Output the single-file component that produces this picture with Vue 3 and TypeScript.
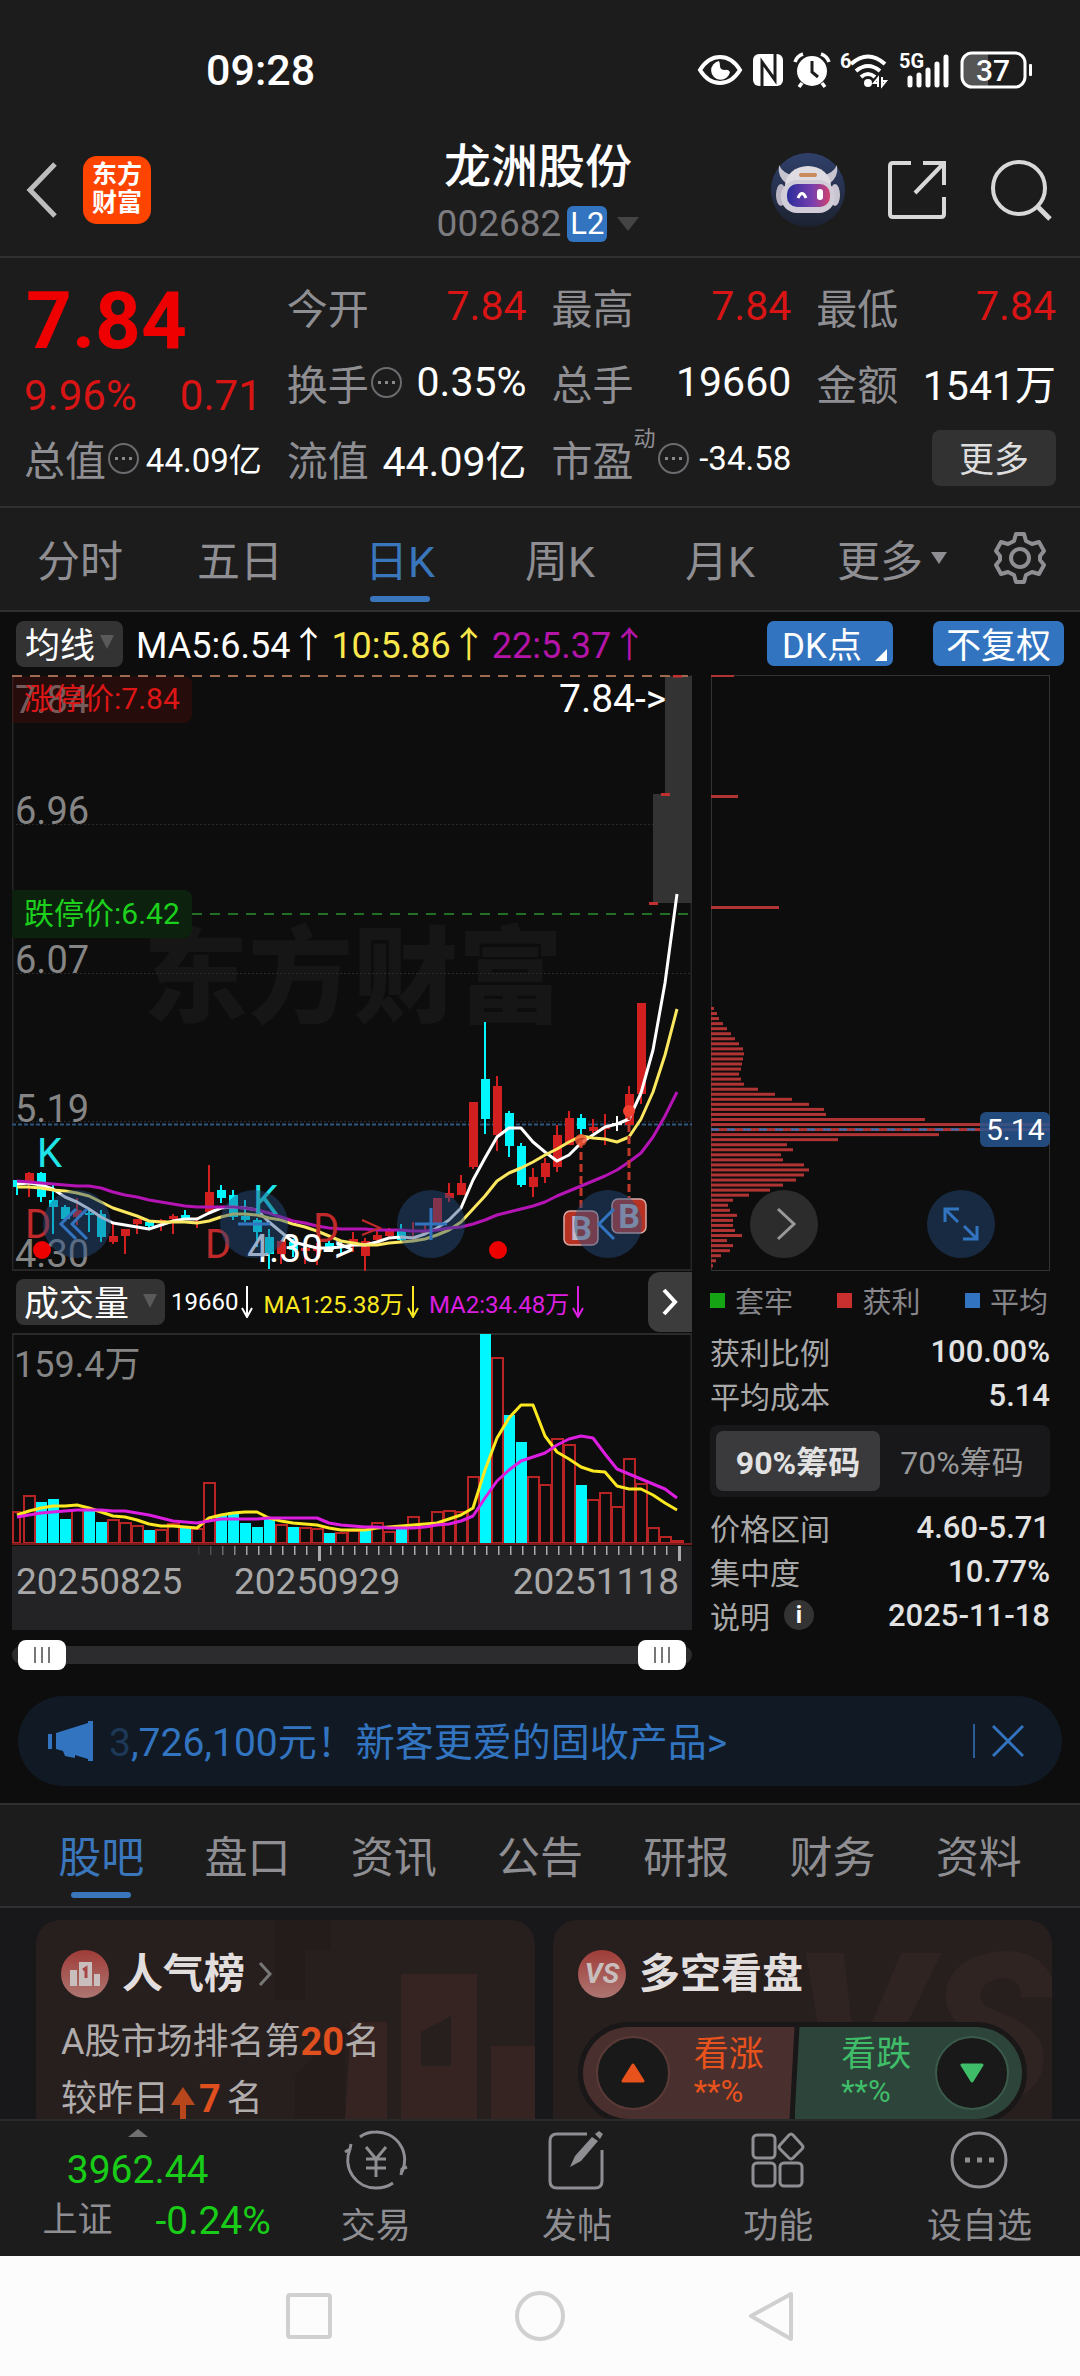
<script setup lang="ts">
import { ref } from 'vue'

type Tone = 'up' | 'down'
type Candle = [Tone, number, number, number, number]

const stepX = (i: number) => 17 + 12 * i

// tone, high, body top, body bottom, low
const candles: Candle[] = [
  ['down', 1180, 1180, 1187, 1195], ['up', 1172, 1173, 1182, 1197], ['down', 1172, 1173, 1197, 1202],
  ['down', 1185, 1200, 1207, 1234], ['down', 1205, 1207, 1219, 1219], ['up', 1198, 1210, 1217, 1225],
  ['down', 1210, 1213, 1215, 1232], ['down', 1210, 1214, 1237, 1242], ['up', 1223, 1236, 1242, 1244],
  ['up', 1229, 1229, 1236, 1254], ['up', 1219, 1219, 1224, 1234], ['down', 1220, 1222, 1226, 1228],
  ['up', 1219, 1220, 1222, 1231], ['up', 1214, 1216, 1219, 1234], ['down', 1210, 1215, 1218, 1219],
  ['up', 1217, 1221, 1223, 1228], ['up', 1165, 1192, 1212, 1212], ['down', 1185, 1190, 1198, 1203],
  ['down', 1190, 1195, 1217, 1220], ['down', 1200, 1216, 1220, 1222], ['down', 1218, 1220, 1232, 1247],
  ['down', 1229, 1237, 1254, 1269], ['up', 1240, 1241, 1254, 1264], ['down', 1239, 1242, 1250, 1257],
  ['up', 1243, 1248, 1251, 1264], ['up', 1243, 1248, 1251, 1265], ['down', 1240, 1243, 1250, 1252],
  ['down', 1241, 1245, 1247, 1254], ['up', 1232, 1239, 1243, 1252], ['up', 1238, 1241, 1256, 1271],
  ['up', 1231, 1235, 1240, 1242], ['up', 1228, 1230, 1236, 1238], ['down', 1224, 1229, 1240, 1241],
  ['up', 1222, 1236, 1239, 1240], ['up', 1225, 1230, 1233, 1235], ['up', 1198, 1198, 1223, 1223],
  ['up', 1183, 1193, 1198, 1202], ['up', 1175, 1183, 1195, 1195], ['up', 1102, 1102, 1167, 1169],
  ['down', 1022, 1079, 1119, 1134], ['up', 1076, 1086, 1135, 1151], ['down', 1111, 1113, 1146, 1157],
  ['down', 1143, 1146, 1185, 1187], ['up', 1168, 1177, 1187, 1197], ['up', 1158, 1163, 1177, 1183],
  ['up', 1125, 1135, 1167, 1172], ['up', 1111, 1118, 1145, 1145], ['down', 1114, 1118, 1129, 1137],
  ['up', 1119, 1127, 1131, 1133], ['up', 1114, 1127, 1129, 1145], ['up', 1124, 1124, 1124, 1124],
  ['up', 1086, 1094, 1125, 1128], ['up', 1003, 1003, 1094, 1104],
]

const ma5 = [
  1184, 1183, 1185, 1189, 1197, 1202, 1209, 1217, 1223, 1225, 1227, 1229, 1225, 1221, 1219, 1219, 1213, 1208, 1207,
  1208, 1210, 1222, 1232, 1242, 1245, 1248, 1248, 1247, 1245, 1245, 1242, 1238, 1237, 1238, 1234, 1228, 1220, 1208,
  1180, 1158, 1137, 1128, 1128, 1142, 1152, 1161, 1155, 1143, 1135, 1127, 1124, 1119, 1093, 1050, 983, 894,
]
const ma10 = [
  1187, 1187, 1188, 1190, 1191, 1193, 1196, 1202, 1208, 1212, 1216, 1221, 1222, 1222, 1222, 1223, 1221, 1217, 1214,
  1214, 1215, 1218, 1220, 1224, 1227, 1231, 1236, 1241, 1243, 1245, 1245, 1243, 1242, 1241, 1239, 1235, 1230, 1222,
  1209, 1196, 1181, 1173, 1168, 1162, 1155, 1149, 1142, 1136, 1138, 1139, 1142, 1137, 1119, 1092, 1055, 1009,
]
const ma22 = [
  1181, 1182, 1183, 1184, 1185, 1186, 1186, 1188, 1192, 1195, 1197, 1200, 1202, 1204, 1206, 1207, 1207, 1207, 1207,
  1208, 1210, 1213, 1217, 1221, 1223, 1226, 1228, 1229, 1229, 1229, 1230, 1230, 1230, 1231, 1231, 1230, 1228, 1227,
  1224, 1220, 1215, 1212, 1209, 1206, 1202, 1196, 1191, 1186, 1181, 1176, 1170, 1162, 1153, 1137, 1116, 1092,
]
const line = (ys: number[]) => ys.map((y, i) => `${stepX(i)},${y}`).join(' ')

const volumes: [Tone, number][] = [
  ['up', 1512], ['up', 1496], ['down', 1502], ['down', 1499], ['down', 1519], ['up', 1510], ['down', 1510],
  ['down', 1522], ['up', 1520], ['up', 1523], ['up', 1526], ['down', 1530], ['up', 1530], ['up', 1524],
  ['down', 1526], ['up', 1529], ['up', 1483], ['down', 1515], ['down', 1512], ['down', 1523], ['down', 1527],
  ['down', 1517], ['up', 1525], ['down', 1527], ['up', 1528], ['up', 1529], ['down', 1533], ['up', 1533],
  ['up', 1531], ['down', 1529], ['up', 1523], ['up', 1532], ['down', 1529], ['up', 1517], ['up', 1527],
  ['up', 1512], ['up', 1511], ['up', 1512], ['up', 1477], ['down', 1334], ['up', 1358], ['down', 1415],
  ['down', 1442], ['up', 1477], ['up', 1485], ['up', 1439], ['up', 1445], ['down', 1485], ['up', 1500],
  ['up', 1493], ['up', 1507], ['up', 1459], ['up', 1484], ['up', 1528], ['up', 1537], ['up', 1541],
]
const vol5 = [
  1515, 1511, 1508, 1506, 1506, 1505, 1508, 1512, 1516, 1517, 1520, 1524, 1526, 1526, 1527, 1528, 1518, 1515, 1513,
  1512, 1512, 1518, 1521, 1523, 1524, 1525, 1528, 1530, 1530, 1530, 1528, 1527, 1526, 1525, 1524, 1523, 1519, 1515,
  1508, 1470, 1438, 1418, 1405, 1405, 1436, 1452, 1459, 1467, 1471, 1472, 1486, 1489, 1489, 1495, 1503, 1510,
]
const vol10 = [
  1517, 1515, 1513, 1512, 1511, 1510, 1510, 1510, 1511, 1511, 1513, 1515, 1518, 1521, 1522, 1523, 1521, 1519, 1519,
  1519, 1519, 1518, 1518, 1518, 1518, 1518, 1523, 1525, 1526, 1527, 1527, 1528, 1528, 1528, 1527, 1525, 1524, 1521,
  1516, 1498, 1481, 1470, 1461, 1457, 1453, 1445, 1439, 1436, 1438, 1454, 1469, 1474, 1479, 1484, 1489, 1498,
]
const ticks = Array.from({ length: 41 }, (_, i) => 198 + 12 * i)

const chips = [
  3, 6, 8, 12, 16, 20, 24, 28, 32, 33, 32, 31, 30, 28, 30, 33, 47, 64, 81, 98, 113, 115, 214, 339, 339, 228, 127, 76,
  82, 70, 72, 93, 98, 93, 85, 72, 59, 38, 22, 17, 19, 26, 22, 22, 24, 31, 16, 22, 19, 10, 5, 2,
]
const chipY = (i: number) => 1008.5 + 5.045 * i

const periods = ['分时', '五日', '日K', '周K', '月K']
const period = ref('日K')
const sections = ['股吧', '盘口', '资讯', '公告', '研报', '财务', '资料']
const section = ref('股吧')
const chipRange = ref('90')
const rangeStart = ref(0)
const rangeEnd = ref(100)
</script>

<template>
  <main class="screen">
    <header class="status">
      <span class="clock">09:28</span>
      <div class="status-icons">
        <svg width="46" height="34" viewBox="0 0 46 34" aria-label="护眼">
          <path d="M3 17Q11 4 23 4T43 17Q35 30 23 30T3 17Z" fill="none" stroke="#fff" stroke-width="4" />
          <path d="M22 8a9.500 9.500 0 1 0 11 11q-2-3-5-2q-5 0-5-4q0-3-1-5Z" fill="#fff" />
        </svg>
        <svg width="32" height="34" viewBox="0 0 32 34" aria-label="NFC">
          <rect x="1" y="1" width="30" height="32" rx="6" fill="#fff" />
          <path d="M10 33V9l13 18V1" fill="none" stroke="#1c1c1c" stroke-width="3" />
        </svg>
        <svg width="38" height="36" viewBox="0 0 38 36" aria-label="闹钟">
          <circle cx="19" cy="19" r="15" fill="#fff" />
          <path d="M2 10q2-6 8-8M36 10q-2-6-8-8M9 31l-3 4M29 31l3 4" stroke="#fff" stroke-width="3.500" fill="none" />
          <path d="M19 9v11l6 5" stroke="#1c1c1c" stroke-width="3" fill="none" />
        </svg>
        <svg width="50" height="38" viewBox="0 0 50 38" aria-label="Wi-Fi">
          <text x="0" y="17" class="tiny-text">6</text>
          <g fill="none" stroke="#fff" stroke-width="4">
            <path d="M11 13q17-15 34 0" /><path d="M16 20q12-10 24 0" /><path d="M21 26q7-6 14 0" />
          </g>
          <circle cx="28" cy="32" r="4" fill="#fff" />
          <path d="M38 36v-9l-4 5h4M42 26v9l4-5h-4" stroke="#fff" stroke-width="2" fill="none" />
        </svg>
        <svg width="52" height="38" viewBox="0 0 52 38" aria-label="5G">
          <text x="0" y="17" class="tiny-text">5G</text>
          <path d="M11 27v7M20 24v10M29 19v15M38 13v21M47 6v28" stroke="#fff" stroke-width="5" stroke-linecap="round" />
        </svg>
        <svg width="74" height="38" viewBox="0 0 74 38" aria-label="电量 37%">
          <path d="M12 3h16v32H12a9 9 0 0 1-9-9V12a9 9 0 0 1 9-9Z" fill="#555" />
          <rect x="2" y="2" width="63" height="34" rx="10" fill="none" stroke="#fff" stroke-width="3" />
          <rect x="69" y="13" width="3" height="12" rx="1" fill="#fff" />
          <text x="33" y="30" text-anchor="middle" class="battery-text">37</text>
        </svg>
      </div>
    </header>

    <nav class="title-bar">
      <div class="title-left">
        <button aria-label="返回">
          <svg width="36" height="60" viewBox="0 0 36 60"><path d="M31 4L6 30l25 26" fill="none" stroke="#bdbdbd" stroke-width="5" /></svg>
        </button>
        <a href="#" class="logo">东方<br />财富</a>
      </div>
      <div class="title-mid">
        <h1>龙洲股份</h1>
        <p>002682<b>L2</b><i class="tri"></i></p>
      </div>
      <div class="title-right">
        <button aria-label="智能助手">
          <svg width="76" height="76" viewBox="0 0 76 76">
            <defs>
              <linearGradient id="visor"><stop offset="0" stop-color="#2a2c9c" /><stop offset="0.600" stop-color="#7a3fae" /><stop offset="1" stop-color="#d2416e" /></linearGradient>
              <linearGradient id="halo" x1="0" y1="0" x2="0" y2="1"><stop offset="0" stop-color="#30406a" /><stop offset="1" stop-color="#1c2230" /></linearGradient>
            </defs>
            <circle cx="38" cy="38" r="37" fill="url(#halo)" />
            <path d="M9 13q-2 12 8 19l8-8q-12-2-16-11M67 13q2 12-8 19l-8-8q12-2 16-11" fill="#c8c4cf" />
            <ellipse cx="38" cy="34" rx="23" ry="20" fill="#dedbe2" />
            <ellipse cx="11" cy="43" rx="5" ry="11" fill="#b9b5c4" /><ellipse cx="65" cy="43" rx="5" ry="11" fill="#c9c5d0" />
            <rect x="11" y="28" width="54" height="33" rx="16" fill="#d0cdd8" />
            <rect x="17" y="32" width="43" height="23" rx="10" fill="url(#visor)" />
            <path d="M28 46q4-9 8 0" fill="none" stroke="#fff" stroke-width="3" /><rect x="47" y="37" width="6" height="11" rx="3" fill="#fff" />
            <rect x="29" y="21" width="18" height="4" rx="2" fill="#c88b5c" />
          </svg>
        </button>
        <button aria-label="分享">
          <svg width="62" height="62" viewBox="0 0 62 62"><path d="M24 4H6q-3 0-3 3v48q0 3 3 3h48q3 0 3-3V38M36 4h21v22M57 4L28 34" fill="none" stroke="#d8d8d8" stroke-width="4" /></svg>
        </button>
        <button aria-label="搜索">
          <svg width="62" height="62" viewBox="0 0 62 62"><circle cx="29" cy="29" r="26" fill="none" stroke="#d8d8d8" stroke-width="4" /><path d="M47 47l13 13" stroke="#d8d8d8" stroke-width="5" /></svg>
        </button>
      </div>
    </nav>

    <section class="quote">
      <div class="price-col">
        <strong>7.84</strong>
        <div class="change"><span>9.96%</span><span>0.71</span></div>
      </div>
      <dl class="cell"><dt>今开</dt><dd class="red">7.84</dd></dl>
      <dl class="cell"><dt>最高</dt><dd class="red">7.84</dd></dl>
      <dl class="cell"><dt>最低</dt><dd class="red">7.84</dd></dl>
      <dl class="cell"><dt>换手<i class="more-dot"></i></dt><dd>0.35%</dd></dl>
      <dl class="cell"><dt>总手</dt><dd>19660</dd></dl>
      <dl class="cell"><dt>金额</dt><dd>1541万</dd></dl>
      <dl class="cell"><dt>总值<i class="more-dot"></i></dt><dd class="small">44.09亿</dd></dl>
      <dl class="cell"><dt>流值</dt><dd>44.09亿</dd></dl>
      <dl class="cell"><dt>市盈<sup>动</sup><i class="more-dot"></i></dt><dd class="small">-34.58</dd></dl>
      <div class="more-cell"><button class="more">更多</button></div>
    </section>

    <nav class="periods">
      <button v-for="p in periods" :key="p" :class="{ on: p === period }" @click="period = p">{{ p }}</button>
      <button><span class="with-tri">更多</span></button>
      <button class="gear" aria-label="设置">
        <svg width="56" height="56" viewBox="0 0 56 56" fill="none" stroke="#8e8e93" stroke-width="4">
          <path d="M24 4h8l2 7 6 3 7-2 5 9-4 5v4l4 5-5 9-7-2-6 3-2 7h-8l-2-7-6-3-7 2-5-9 4-5v-4l-4-5 5-9 7 2 6-3Z" stroke-linejoin="round" />
          <circle cx="28" cy="28" r="9" />
        </svg>
      </button>
    </nav>

    <section class="market">
      <div class="indicators">
        <button class="pick">均线<i class="tri"></i></button>
        <span>MA5:6.54↑</span><span class="yellow">10:5.86↑</span><span class="purple">22:5.37↑</span>
        <div class="blue-actions">
          <button class="blue dk">DK点</button>
          <button class="blue">不复权</button>
        </div>
      </div>

      <div class="charts">
        <div class="left">
          <div class="plot">
            <svg viewBox="12 675 680 596" role="img" aria-label="日K线">
              <text x="143" y="1014" class="watermark">东方财富</text>
              <path d="M12 824.500H692M12 973.500H692M12 1121.500H692" stroke="#2b2b2b" stroke-dasharray="2 2" />
              <path d="M12.500 675V1270H691.500V675" fill="none" stroke="#262626" stroke-width="2" />
              <path d="M665 676h27v227h-39v-109h12Z" fill="#333" />
              <g class="axis">
                <text x="15" y="713">7.84</text><text x="15" y="824">6.96</text><text x="15" y="973">6.07</text>
                <text x="15" y="1122">5.19</text><text x="15" y="1267">4.30</text>
              </g>
              <path d="M12 676H184a8 8 0 0 1 8 8v31a8 8 0 0 1-8 8H12Z" fill="#5a0c0c" fill-opacity="0.340" />
              <text x="24" y="709" class="limit" fill="#dd1616">涨停价:7.84</text>
              <path d="M12 676H692" stroke="#a06a50" stroke-width="2" stroke-dasharray="10 8" />
              <path d="M12 890H184a8 8 0 0 1 8 8v32a8 8 0 0 1-8 8H12Z" fill="#0c220e" />
              <text x="24" y="924" class="limit" fill="#1cd01c">跌停价:6.42</text>
              <path d="M192 914H692" stroke="#226f26" stroke-width="2" stroke-dasharray="10 8" />
              <path d="M12 1124.500H692" stroke="#2d5580" stroke-width="2" stroke-dasharray="4 2" />
              <g v-for="(c, i) in candles" :key="i" :fill="c[0] === 'up' ? '#d21f1f' : '#00f7ff'">
                <rect :x="stepX(i) - 1" :y="c[1]" width="2" :height="c[4] - c[1]" />
                <rect :x="Math.max(13, stepX(i) - 4)" :y="c[2]" :width="i ? 9 : 5" :height="c[3] - c[2]" />
              </g>
              <path d="M649 903.500h9M661 794.500h9M673 676h9" stroke="#c03030" stroke-width="3" />
              <path d="M617 1116v15M612 1124h10" stroke="#fff" stroke-width="2" />
              <g fill="none" stroke-width="3" stroke-linejoin="round">
                <polyline :points="line(ma5)" stroke="#fff" />
                <polyline :points="line(ma10)" stroke="#fbe860" />
                <polyline :points="line(ma22)" stroke="#b414b4" />
              </g>
              <g class="mark">
                <text x="37" y="1167" fill="#1fe4e8">K</text><text x="253" y="1214" fill="#1fe4e8">K</text>
                <g fill="#c02a2a"><text x="25" y="1238">D</text><text x="205" y="1258">D</text><text x="313" y="1242">D</text></g>
              </g>
              <path d="M362 1220l18 8-18 7" stroke="#c02a2a" stroke-width="2" fill="none" />
              <g class="peak"><text x="559" y="712">7.84-&gt;</text><text x="247" y="1262">4.30-&gt;</text></g>
              <circle cx="42" cy="1250" r="9" fill="#ee0000" /><circle cx="498" cy="1250" r="9" fill="#ee0000" />
              <path d="M581 1140V1210M629 1112V1198" stroke="#c0392b" stroke-width="3" stroke-dasharray="8 4" />
              <circle cx="581" cy="1140" r="6" fill="#ef5030" fill-opacity="0.800" /><circle cx="629" cy="1111" r="6" fill="#ef4030" />
              <g fill="#b83224" stroke="#d8aaa6" stroke-width="1.500">
                <rect x="564" y="1211" width="34" height="34" rx="6" /><rect x="612" y="1199" width="34" height="34" rx="6" />
              </g>
              <g class="buy"><text x="581" y="1240">B</text><text x="629" y="1228">B</text></g>
            </svg>
            <div class="float-tools">
              <button aria-label="向前"><svg viewBox="0 0 68 68"><path d="M33 19L18 34l15 15M44 19L29 34l15 15" /></svg></button>
              <button aria-label="缩小"><svg viewBox="0 0 68 68"><path d="M18 34h32" /></svg></button>
              <button aria-label="放大"><svg viewBox="0 0 68 68"><path d="M18 34h32M34 18v32" /></svg></button>
              <button aria-label="左移"><svg viewBox="0 0 68 68"><path d="M40 19L25 34l15 15" /></svg></button>
            </div>
          </div>

          <div class="volume-head">
            <button class="pick wide">成交量<i class="tri"></i></button>
            <span>19660<svg class="arrow" viewBox="0 0 12 32"><path d="M6 0v31M1 22l5 9 5-9" /></svg></span>
            <span class="vy">MA1:25.38万<svg class="arrow" viewBox="0 0 12 32"><path d="M6 0v31M1 22l5 9 5-9" /></svg></span>
            <span class="vp">MA2:34.48万<svg class="arrow" viewBox="0 0 12 32"><path d="M6 0v31M1 22l5 9 5-9" /></svg></span>
            <button class="next" aria-label="下一个指标"><svg width="20" height="32" viewBox="0 0 20 32"><path d="M4 4l11 12L4 28" fill="none" stroke="#fff" stroke-width="4" /></svg></button>
          </div>

          <svg viewBox="12 1333 680 297" role="img" aria-label="成交量">
            <path d="M12.500 1543V1334H691.500V1543" fill="none" stroke="#2a2a2a" stroke-width="2" />
            <text x="14" y="1377" class="vol-max">159.4万</text>
            <template v-for="(v, i) in volumes" :key="i">
              <rect v-if="v[0] === 'down'" :x="stepX(i) - 5" :y="v[1]" width="11" :height="1543 - v[1]" fill="#00f7ff" />
              <rect v-else :x="Math.max(13, stepX(i) - 5)" :y="v[1]" :width="i ? 11 : 7" :height="1543 - v[1]" fill="#0d0d0d" stroke="#b82424" stroke-width="2" />
            </template>
            <path d="M12 1544H692" stroke="#7a1c1c" stroke-width="2" />
            <g fill="none" stroke-width="3" stroke-linejoin="round">
              <polyline :points="line(vol5)" stroke="#fbe820" />
              <polyline :points="line(vol10)" stroke="#dc1ee0" />
            </g>
            <rect x="12" y="1546" width="680" height="84" fill="#232325" />
            <rect v-for="(t, i) in ticks" :key="t" :x="t" y="1546" :width="t === 318 || t === 678 ? 3 : 1.500" :height="t === 318 || t === 678 ? 15 : 9" fill="#aaa" :fill-opacity="Math.min(1, 0.150 + i * 0.200)" />
            <g class="dates"><text x="16" y="1594">20250825</text><text x="234" y="1594">20250929</text><text x="679" y="1594" text-anchor="end">20251118</text></g>
          </svg>

          <div class="range">
            <input v-model="rangeStart" type="range" min="0" max="100" aria-label="起始日期" />
            <input v-model="rangeEnd" type="range" min="0" max="100" aria-label="结束日期" />
          </div>
        </div>

        <div class="right">
          <div class="plot">
            <svg viewBox="710 675 340 596" role="img" aria-label="筹码分布">
              <rect x="711.500" y="675.500" width="338" height="595" fill="none" stroke="#333" />
              <g fill="#b03434">
                <rect x="711" y="675" width="23" height="2" /><rect x="711" y="795" width="27" height="3" /><rect x="711" y="906" width="68" height="3" />
                <rect v-for="(w, i) in chips" :key="i" x="711" :y="chipY(i) - 1.500" :width="w" height="3" />
              </g>
              <path d="M711 1129.500H980" stroke="#3274c0" stroke-width="2" stroke-dasharray="8 8" />
              <rect x="980" y="1112" width="70" height="35" rx="6" fill="#285690" fill-opacity="0.850" />
              <text x="986" y="1140" class="avg">5.14</text>
            </svg>
            <div class="float-tools chips-tools">
              <button class="gray" aria-label="下一日"><svg viewBox="0 0 68 68"><path d="M28 19l16 15-16 15" /></svg></button>
              <button aria-label="全屏"><svg viewBox="0 0 68 68"><path d="M18 32V19h14M19 20l12 12M50 36v13H36M49 48L37 36" /></svg></button>
            </div>
          </div>
          <ul class="legend"><li class="g">套牢</li><li class="r">获利</li><li class="b">平均</li></ul>
          <dl class="row"><dt>获利比例</dt><dd>100.00%</dd></dl>
          <dl class="row"><dt>平均成本</dt><dd>5.14</dd></dl>
          <div class="segment">
            <button :class="{ on: chipRange === '90' }" @click="chipRange = '90'">90%筹码</button>
            <button :class="{ on: chipRange === '70' }" @click="chipRange = '70'">70%筹码</button>
          </div>
          <dl class="row"><dt>价格区间</dt><dd>4.60-5.71</dd></dl>
          <dl class="row"><dt>集中度</dt><dd>10.77%</dd></dl>
          <dl class="row"><dt>说明<button class="info" aria-label="筹码说明">i</button></dt><dd>2025-11-18</dd></dl>
        </div>
      </div>

      <div class="banner">
        <svg width="46" height="40" viewBox="0 0 46 40" fill="#3274c0"><path d="M0 13h4v15H0ZM8 12L40 2V0h5v40h-5v-2l-13-4v3l-10-2-2-5-7-2Z" /></svg>
        <a href="#"><span class="fade">3</span>,726,100元！新客更爱的固收产品&gt;</a>
        <button aria-label="关闭"><svg width="32" height="34" viewBox="0 0 32 34"><path d="M1 2l30 30M31 2L1 32" stroke="#3274c0" stroke-width="3" /></svg></button>
      </div>
    </section>

    <nav class="sections">
      <button v-for="s in sections" :key="s" :class="{ on: s === section }" @click="section = s">{{ s }}</button>
    </nav>

    <section class="cards">
      <article class="card">
        <svg class="deco" viewBox="0 0 260 200"><path d="M0 80h30V30h26V0H0ZM20 156l50-50v94H20Z" fill="#000" fill-opacity="0.080" /><path d="M126 54h76v146h-76ZM76 102h36v98H70ZM216 126h44v74h-44Z" fill="#432826" fill-opacity="0.550" /><path d="M146 112l30-16v50h-30Z" fill="#261f1e" /></svg>
        <h2>
          <svg width="48" height="48" viewBox="0 0 48 48"><circle cx="24" cy="24" r="24" fill="url(#badge)" /><path d="M9 20h7v16H9ZM18 12h13v24H18ZM33 24h6v12h-6Z" fill="#c8bebe" /><path d="M22 20l3-2v10" stroke="#a84844" stroke-width="3" fill="none" />
            <defs><linearGradient id="badge" x1="0" y1="0" x2="0" y2="1"><stop offset="0" stop-color="#a03c38" /><stop offset="1" stop-color="#ad7672" /></linearGradient></defs></svg>
          人气榜
          <svg class="go" width="14" height="26" viewBox="0 0 14 26"><path d="M2 2l10 11L2 24" fill="none" stroke="#777" stroke-width="3" /></svg>
        </h2>
        <p>A股市场排名第<b>20</b>名</p>
        <p>较昨日<svg class="rise" width="24" height="34" viewBox="0 0 24 34"><path d="M12 0L24 18H15V34H9V18H0Z" fill="#b8461c" /></svg><b>7</b><span class="unit">名</span></p>
      </article>
      <article class="card">
        <span class="deco vs">VS</span>
        <h2>
          <svg width="48" height="48" viewBox="0 0 48 48"><circle cx="24" cy="24" r="24" fill="url(#badge)" /><text x="24" y="33" text-anchor="middle" class="vs-badge">VS</text></svg>
          多空看盘
        </h2>
        <div class="vote">
          <button class="bull"><i><svg width="24" height="20" viewBox="0 0 24 20"><path d="M12 2l10 16H2Z" fill="#e8521c" stroke="#e8521c" stroke-width="3" stroke-linejoin="round" /></svg></i><span>看涨<small>**%</small></span></button>
          <button class="bear"><span>看跌<small>**%</small></span><i><svg width="24" height="20" viewBox="0 0 24 20"><path d="M12 18L2 2h20Z" fill="#3fbd68" stroke="#3fbd68" stroke-width="3" stroke-linejoin="round" /></svg></i></button>
        </div>
      </article>
    </section>

    <footer class="dock">
      <button class="index">
        <i class="tri up"></i>
        <strong>3962.44</strong>
        <span>上证<em>-0.24%</em></span>
      </button>
      <button>
        <svg width="64" height="60" viewBox="0 0 64 60"><path d="M16 7Q22 2 32 2A28 28 0 0 1 58 42M63 37l-5 2-1 6M49 53Q42 58 32 58A28 28 0 0 1 6 19M1 22l5-3 1-5M22 17l10 12 10-12M32 29v18M22 29h20M22 38h20" /></svg>交易
      </button>
      <button>
        <svg width="64" height="60" viewBox="0 0 64 60"><path d="M42 4H12q-7 0-7 7v40q0 7 7 7h38q7 0 7-7V20" /><path d="M25 37l5-11 17-19 6 4-17 20ZM50 4l4-3 4 3-3 5Z" fill="#8e8e93" stroke="none" /></svg>发帖
      </button>
      <button>
        <svg width="64" height="60" viewBox="0 0 64 60"><rect x="7" y="5" width="22" height="23" rx="4" /><rect x="7" y="33" width="22" height="23" rx="4" /><rect x="34" y="33" width="22" height="23" rx="4" /><path d="M43 5q2-2 4 0l9 10q2 2 0 4l-9 9q-2 2-4 0l-9-9q-2-2 0-4Z" /></svg>功能
      </button>
      <button>
        <svg width="64" height="60" viewBox="0 0 64 60"><circle cx="32" cy="30" r="27" /><path d="M18 30h5M30 30h5M42 30h5" stroke-width="5" /></svg>设自选
      </button>
    </footer>

    <nav class="system">
      <button aria-label="最近任务"><svg width="52" height="52" viewBox="0 0 52 52"><rect x="5" y="5" width="42" height="42" rx="2" /></svg></button>
      <button aria-label="主屏幕"><svg width="52" height="52" viewBox="0 0 52 52"><circle cx="26" cy="26" r="23" /></svg></button>
      <button aria-label="返回上一页"><svg width="52" height="52" viewBox="0 0 52 52"><path d="M46 4v45L6 26Z" stroke-linejoin="round" /></svg></button>
    </nav>
  </main>
</template>

<style>
body { background: #1c1c1c; }
</style>

<style scoped>
* { box-sizing: border-box; }
.screen { font-family: Roboto, "Noto Sans CJK SC", sans-serif; background: #1c1c1c; color: #fff; overflow: hidden; }
button { background: none; border: 0; padding: 0; margin: 0; font: inherit; color: inherit; display: flex; align-items: center; justify-content: center; }
a { color: inherit; text-decoration: none; }
h1, h2, p, dl, dt, dd, ul { margin: 0; padding: 0; }
i, em { font-style: normal; }
svg { display: block; }
.left > svg, .plot > svg { width: 100%; height: auto; }
.tri { border: 7px solid transparent; border-top: 14px solid #5a5a5a; border-bottom: 0; }

.status { display: flex; justify-content: space-between; align-items: center; height: 140px; padding: 0 46px 0 206px; }
.clock { font-size: 43px; font-weight: 500; }
.status-icons { display: flex; align-items: center; gap: 9px; }
.status-icons svg { overflow: visible; }
.tiny-text { font-size: 20px; font-weight: 700; fill: #fff; }
.battery-text { font-size: 30px; font-weight: 500; fill: #fff; }

.title-bar { display: grid; grid-template-columns: 1fr auto 1fr; align-items: center; height: 118px; padding: 0 28px 0 24px; border-bottom: 2px solid #303030; }
.title-left, .title-right { display: flex; align-items: center; padding-bottom: 16px; }
.title-left { gap: 23px; }
.title-right { justify-content: flex-end; gap: 41px; }
.logo { display: block; width: 68px; height: 68px; border-radius: 14px; background: #ff4400; font-size: 25px; line-height: 28px; padding-top: 5px; font-weight: 700; text-align: center; }
.title-mid { text-align: center; }
.title-mid h1 { font-size: 47px; line-height: 50px; font-weight: 500; }
.title-mid p { display: flex; align-items: center; justify-content: center; font-size: 37px; line-height: 56px; padding-top: 4px; padding-bottom: 3px; color: #7c7c80; }
.title-mid b { background: #3274c0; color: #fff; border-radius: 6px; width: 40px; height: 36px; line-height: 36px; margin: 0 10px 0 6px; font-size: 31px; font-weight: 400; }
.title-mid .tri { border-width: 14px 11px 0; border-top-color: #444; }

.quote { display: grid; grid-template-columns: 238fr 240fr 240fr 240fr; column-gap: 25px; grid-auto-rows: 76px; padding: 10px 24px; border-bottom: 2px solid #303030; }
.price-col { grid-row: span 2; color: #d81414; padding-top: 5px; }
.price-col strong { display: block; font-size: 80px; line-height: 96px; font-weight: 700; color: #ee0000; padding-left: 2px; }
.change { display: flex; justify-content: space-between; font-size: 42px; line-height: 54px; }
.cell { display: flex; align-items: center; justify-content: space-between; font-size: 41px; white-space: nowrap; }
.cell dt { display: flex; align-items: center; color: #8e8e93; }
.cell .red { color: #d81414; }
.cell .small { font-size: 33px; }
.cell sup { font-size: 22px; align-self: flex-start; line-height: 22px; }
.more-dot { width: 31px; height: 31px; border: 2px solid #6c6c70; border-radius: 50%; margin-left: 2px; background: radial-gradient(circle, #8a8a8e 2px, transparent 2px) center / 7px 7px repeat-x content-box; padding: 0 3px; }
.more-cell { display: flex; justify-content: flex-end; align-items: center; }
.more { width: 124px; height: 56px; border-radius: 8px; background: #323232; color: #ddd; font-size: 35px; padding-bottom: 3px; }

.periods { display: flex; height: 104px; border-bottom: 2px solid #303030; color: #8e8e93; font-size: 43px; }
.periods button { flex: 160; position: relative; padding-bottom: 2px; }
.periods .gear { flex: 120; }
.on { color: #3a76bc; }
.periods .on::after, .sections .on::after { content: ""; position: absolute; bottom: 8px; left: 50%; margin-left: -30px; width: 60px; height: 6px; border-radius: 3px; background: #3a76bc; }
.with-tri { position: relative; }
.with-tri::after { content: ""; position: absolute; right: -24px; top: 50%; margin-top: -6px; border: 8px solid transparent; border-top: 12px solid #8e8e93; border-bottom: 0; }

.market { background: #0d0d0d; padding: 0 0 17px; }
.indicators { display: flex; align-items: center; height: 63px; padding: 0 16px; font-size: 36px; white-space: nowrap; }
.indicators > span { margin-right: 5px; padding-bottom: 3px; }
.pick { height: 46px; border-radius: 8px; background: #333; font-size: 35px; padding: 0 9px 3px; gap: 5px; margin-right: 13px; }
.wide { padding: 0 8px 3px; gap: 14px; margin-right: 6px; }
.yellow { color: #fbe84c; }
.purple { color: #b414a8; }
.blue-actions { display: flex; gap: 40px; margin-left: auto; }
.blue { position: relative; height: 45px; border-radius: 7px; background: #3274c0; font-size: 35px; padding: 0 13px 3px; }
.dk { padding-right: 31px; padding-left: 15px; }
.dk::after { content: ""; position: absolute; right: 6px; bottom: 5px; border: 6px solid #fff; border-left-color: transparent; border-top-color: transparent; }

.charts { display: grid; grid-template-columns: 680fr 340fr; column-gap: 18px; padding: 0 30px 0 12px; }
.plot { position: relative; }
.float-tools { position: absolute; left: 31px; right: 50px; bottom: 13px; display: flex; justify-content: space-between; }
.chips-tools { left: 40px; right: 55px; }
.float-tools button { width: 68px; height: 68px; border-radius: 50%; background: rgba(36, 78, 130, 0.45); }
.float-tools .gray { background: #2c2c2c; }
.float-tools svg { width: 68px; height: 68px; fill: none; stroke: #3274c0; stroke-width: 3; }
.float-tools .gray svg { stroke: #999; }
.watermark { font-size: 105px; font-weight: 900; fill: #161616; }
.axis { font-size: 38px; fill: #858585; }
.limit { font-size: 30px; }
.mark { font-size: 40px; }
.peak { font-size: 39px; fill: #fff; }
.buy { font-size: 34px; font-weight: 700; fill: #c0b8c4; text-anchor: middle; }
.vol-max { font-size: 36px; fill: #858585; }
.dates { font-size: 37px; fill: #a8a8a8; }
.avg { font-size: 30px; fill: #fff; }

.volume-head { display: flex; align-items: center; height: 62px; padding-left: 4px; font-size: 24px; white-space: nowrap; }
.volume-head span { display: flex; align-items: center; gap: 3px; margin-right: 10px; }
.arrow { width: 12px; height: 32px; fill: none; stroke: currentColor; stroke-width: 2; }
.vy { color: #fbe820; }
.vp { color: #dc1ee0; }
.next { width: 44px; height: 60px; background: #3c3c3c; border-radius: 12px 0 0 12px; margin-left: auto; }

.range { position: relative; height: 30px; margin-top: 10px; padding: 6px 0; }
.range::before { content: ""; display: block; height: 18px; border-radius: 9px; background: #2c2c2e; }
.range input { position: absolute; left: 6px; right: 6px; top: 0; width: calc(100% - 12px); height: 30px; margin: 0; appearance: none; background: none; pointer-events: none; }
.range input::-webkit-slider-thumb { appearance: none; pointer-events: auto; width: 48px; height: 30px; border-radius: 8px; background: linear-gradient(90deg, #777 2px, transparent 2px, transparent 7px, #777 7px, #777 9px, transparent 9px, transparent 14px, #777 14px) center / 16px 16px no-repeat, #fff; }

.legend { display: flex; justify-content: space-between; list-style: none; height: 58px; align-items: center; font-size: 29px; color: #85858a; padding-right: 2px; }
.legend li { display: flex; align-items: center; gap: 10px; }
.legend li::before { content: ""; width: 15px; height: 15px; background: #14a414; }
.legend .r::before { background: #c83030; }
.legend .b::before { background: #3274c0; }
.row { display: flex; justify-content: space-between; align-items: center; height: 44px; font-size: 30px; }
.row dt { display: flex; align-items: center; gap: 14px; color: #a8a8a8; }
.row dd { font-size: 31px; font-weight: 500; color: #e2e2e2; }
.info { width: 30px; height: 30px; border-radius: 50%; background: #333; color: #fff; font-size: 24px; font-weight: 700; }
.segment { display: flex; height: 72px; margin: 8px 0; padding: 6px; border-radius: 8px; background: #18181a; font-size: 32px; color: #999; }
.segment button { flex: 1; border-radius: 7px; padding-bottom: 2px; }
.segment .on { background: #3a3a3c; color: #e2e2e2; font-weight: 700; }

.banner { display: flex; align-items: center; height: 90px; margin: 26px 18px 0; padding: 0 38px 0 30px; border-radius: 45px; background: #111a24; color: #3274c0; font-size: 39px; white-space: nowrap; }
.banner a { margin-left: 15px; flex: 1; padding-bottom: 5px; }
.fade { color: #1d3957; }
.banner button { border-left: 2px solid #2a5c96; padding-left: 17px; }

.sections { display: flex; height: 105px; padding: 0 28px; border-top: 2px solid #303030; border-bottom: 2px solid #303030; font-size: 43px; color: #8e8e93; }
.sections button { flex: 1; position: relative; padding-bottom: 4px; }

.cards { display: flex; gap: 18px; height: 211px; padding: 12px 28px 0 36px; background: #18181a; overflow: hidden; }
.card { position: relative; flex: 1; height: 250px; padding: 22px 25px 0; border-radius: 24px; background: #261f1e; overflow: hidden; }
.card > * { position: relative; }
.card h2 { display: flex; align-items: center; gap: 13px; font-size: 41px; line-height: 64px; font-weight: 700; color: #e2dede; }
.card p { display: flex; align-items: center; font-size: 36px; line-height: 57px; color: #b0acac; }
.card h2 + p { margin-top: 8px; }
.card b { color: #e0501e; font-size: 38px; }
.card .rise { margin: 8px 4px 0 2px; }
.card .unit { margin-left: 6px; }
.card .deco { position: absolute; right: 0; top: 0; width: 260px; }
.card .vs { font-size: 210px; line-height: 220px; font-weight: 900; font-style: italic; color: #302422; }
.vs-badge { font-size: 28px; font-weight: 700; font-style: italic; fill: #c8bebe; }
.vote { display: flex; margin-top: 16px; height: 102px; border: 5px solid #191717; border-radius: 51px; overflow: hidden; background: #191717; }
.vote button { flex: 1; gap: 24px; font-size: 35px; line-height: 38px; text-align: left; }
.bull { background: #49302e; color: #e8521c; padding-right: 18px; clip-path: polygon(0 0, 100% 0, calc(100% - 5px) 100%, 0 100%); }
.bear { background: #2c443a; color: #3fbd68; padding-left: 34px; clip-path: polygon(5px 0, 100% 0, 100% 100%, 0 100%); }
.vote i { display: flex; align-items: center; justify-content: center; width: 74px; height: 74px; border-radius: 50%; background: #191919; border: 2px solid #5a3a36; }
.vote .bear i { border-color: #3a5a4a; }
.vote small { display: block; font-size: 31px; line-height: 36px; }

.dock { display: flex; height: 137px; border-top: 2px solid #2a2a2a; font-size: 35px; color: #8e8e93; }
.dock button { flex: 201; flex-direction: column; justify-content: flex-start; padding-top: 9px; line-height: 50px; gap: 12px; }
.dock .index { flex: 275; gap: 0; padding-top: 8px; }
.dock .up { border-width: 0 10px 8px; border-bottom: 8px solid #707070; }
.dock strong { font-size: 39px; font-weight: 400; line-height: 66px; color: #18cc18; }
.dock .index span { display: flex; gap: 43px; line-height: 36px; padding-left: 38px; }
.dock em { color: #18cc18; font-size: 39px; }
.dock svg { fill: none; stroke: #8e8e93; stroke-width: 3; }

.system { display: flex; justify-content: center; gap: 179px; height: 120px; background: #fcfcfc; }
.system svg { fill: none; stroke: #d0d0d0; stroke-width: 4; }
</style>
